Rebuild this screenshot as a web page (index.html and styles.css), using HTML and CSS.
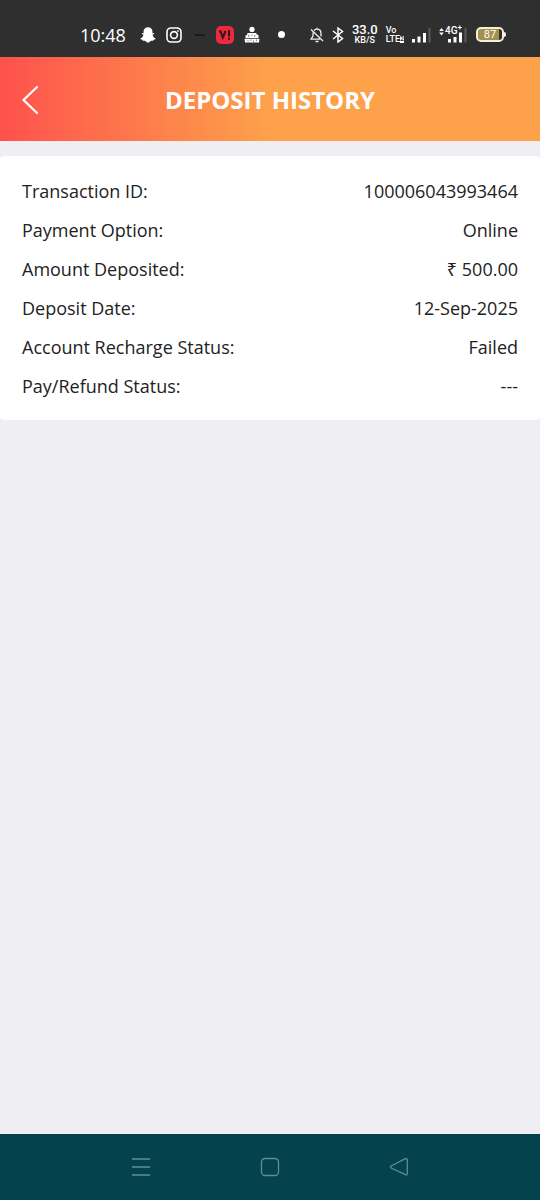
FILE: index.html
```html
<!DOCTYPE html>
<html lang="en">
<head>
<meta charset="utf-8">
<meta name="viewport" content="width=device-width, initial-scale=1">
<title>Deposit History</title>
<link rel="stylesheet" href="styles.css">
</head>
<body>
<div class="screen">
  <div class="status-bar">
    <div class="status-group status-left">
      <span class="clock">10:48</span>
      <svg width="16" height="16" viewBox="0 0 16 16" fill="#fff" aria-hidden="true"><path d="M8 .3C5.300.3 3.600 2 3.600 4.300V6.200L2.100 6C1.500 6.300 2 7.200 3.400 7.700C3.200 9.300 2 10.800.3 11.500C.1 12.300 1 12.600 2.400 12.800L2.800 13.800L4.900 13.700C6 14.500 6.800 15.500 8 15.500S10 14.500 11.100 13.700L13.200 13.800L13.600 12.800C15 12.600 15.900 12.300 15.700 11.500C14 10.800 12.800 9.300 12.600 7.700C14 7.200 14.500 6.300 13.900 6L12.400 6.200V4.300C12.400 2 10.700.3 8 .3Z"/></svg>
      <svg width="16" height="16" viewBox="0 0 16 16" fill="none" stroke="#fff" stroke-width="1.600" aria-hidden="true"><rect x="1" y="1" width="14" height="14" rx="4"/><circle cx="8" cy="8" r="3.400"/><circle cx="12" cy="4" r=".6" fill="#fff" stroke-width=".6"/></svg>
      <svg width="14" height="16" viewBox="0 0 14 16" aria-hidden="true"><path d="M2 8L5 7L6 7.500H13V8.700H6L5 9Z" fill="#111"/></svg>
      <span class="vi-badge"><svg width="18" height="18" viewBox="0 0 18 18" fill="none" stroke="#2d1720" stroke-width="2" aria-hidden="true"><path d="M3 5.500H4.600L6.800 11.500L9.600 5M13 4V10.500M13 11.800V13.800"/></svg></span>
      <svg width="16" height="18" viewBox="0 0 16 18" fill="#fff" aria-hidden="true"><circle cx="8" cy="3.400" r="2.600"/><path d="M3.500 7H12L13 8.500L14.500 9V12H1.500V9.500L3 9Z"/><path d="M5 8.500L4.500 11M8 8.500V10M11 9L10.500 11" stroke="#2f2f2f" stroke-width=".6"/><path d="M.5 12.800H15.500L15 16.500H1Z"/><path d="M4 14V15.500M7 13.500V15M9.500 14.500V16M12.500 13.500V15" stroke="#2f2f2f" stroke-width=".6"/></svg>
      <span class="dot"></span>
    </div>
    <div class="status-group status-right">
      <svg width="14" height="16" viewBox="0 0 14 16" fill="none" stroke="#eee" stroke-width="1.300" aria-hidden="true"><path d="M4 3.400C5 2.500 6 2.200 7 2.200C9.500 2.200 11 4 11 6.500V9.500M3 5.500V9L1 12.200H10M5.500 14.500H8.500M7 .7V2M1 2.500L13 14"/></svg>
      <svg width="12" height="16" viewBox="0 0 12 16" fill="none" stroke="#fff" stroke-width="1.500" aria-hidden="true"><path d="M1 4L10.500 11.500L6 15V1L10.500 4.500L1 12"/></svg>
      <span class="speed"><span class="speed-value">33.0</span><span class="speed-unit">KB/S</span></span>
      <span class="volte"><span>Vo</span><span class="volte-row">LTE<span class="volte-sim">2</span></span></span>
      <svg width="19" height="16" viewBox="0 0 19 16" fill="#fff" aria-hidden="true"><path d="M0 12H3V15.500H0ZM5.500 9.500H8.500V15.500H5.500ZM11 6H14V15.500H11Z"/><path d="M16.500 1H18.500V15.500H16.500Z" fill="#5b5b5b"/></svg>
      <span class="network">
        <svg width="29" height="16" viewBox="0 0 29 16" fill="#fff" aria-hidden="true"><path d="M.2 4L2.500 1L4.800 4ZM.2 5.500L2.500 8.500L4.800 5.500Z"/><path d="M9 12H12V15.500H9ZM14.500 10H17.500V15.500H14.500ZM20 5.500H23V15.500H20Z"/><path d="M25.500 1H27.500V15.500H25.500Z" fill="#5b5b5b"/></svg>
        <span class="network-label">4G<sup>+</sup></span>
      </span>
      <span class="battery">87</span>
    </div>
  </div>

  <header class="app-header">
    <button class="back" type="button" aria-label="Back"><svg width="18" height="30" viewBox="0 0 18 30" fill="none" stroke="#fff" stroke-width="2.300" stroke-linecap="round" stroke-linejoin="round" aria-hidden="true"><path d="M16 2L2.500 15L16 28"/></svg></button>
    <h1 class="title">DEPOSIT HISTORY</h1>
  </header>

  <main class="content">
    <dl class="card">
      <div class="row"><dt>Transaction ID:</dt><dd>100006043993464</dd></div>
      <div class="row"><dt>Payment Option:</dt><dd>Online</dd></div>
      <div class="row"><dt>Amount Deposited:</dt><dd>₹ 500.00</dd></div>
      <div class="row"><dt>Deposit Date:</dt><dd>12-Sep-2025</dd></div>
      <div class="row"><dt>Account Recharge Status:</dt><dd>Failed</dd></div>
      <div class="row"><dt>Pay/Refund Status:</dt><dd>---</dd></div>
    </dl>
  </main>

  <nav class="nav-bar" aria-label="System">
    <button class="nav-button" type="button" aria-label="Recent apps"><svg width="20" height="20" viewBox="0 0 20 20" fill="none" stroke="#5d9096" stroke-width="1.400" aria-hidden="true"><path d="M1 2H19M1 10H19M1 18H19"/></svg></button>
    <button class="nav-button" type="button" aria-label="Home"><svg width="20" height="20" viewBox="0 0 20 20" fill="none" stroke="#5d9096" stroke-width="1.300" aria-hidden="true"><rect x="1.500" y="1.500" width="17" height="17" rx="3.500"/></svg></button>
    <button class="nav-button" type="button" aria-label="Go back"><svg width="20" height="20" viewBox="0 0 20 20" fill="none" stroke="#5d9096" stroke-width="1.300" stroke-linejoin="round" aria-hidden="true"><path d="M2 9L16.500 1.700Q18.300 1.300 18.300 3V16.500Q18.300 18.300 16.500 17.700L2 11Q1 10 2 9Z"/></svg></button>
  </nav>
</div>
</body>
</html>
```
FILE: styles.css
```css
* {
  box-sizing: border-box;
}

body {
  margin: 0;
  font-family: "Open Sans", "Noto Sans", sans-serif;
  color: #222;
  background: #efeef3;
}

button {
  padding: 0;
  border: 0;
  background: none;
  cursor: pointer;
}

svg {
  display: block;
  flex: none;
}

.screen {
  display: flex;
  flex-direction: column;
  min-height: 100vh;
}

.status-bar {
  display: flex;
  justify-content: space-between;
  align-items: center;
  padding: 12px 36px 0 80px;
  height: 57px;
  background: #2f2f2f;
  color: #fff;
}

.status-group {
  display: flex;
  align-items: center;
}

.status-left {
  gap: 10px;
}

.status-right {
  gap: 8px;
}

.clock {
  margin-right: 4px;
  font-size: 18px;
  line-height: 24px;
}

.vi-badge {
  border-radius: 5px;
  background: #ed2a3c;
}

.dot {
  width: 7px;
  height: 7px;
  margin-left: 8px;
  border-radius: 50%;
  background: #fff;
}

.speed,
.volte {
  display: flex;
  flex-direction: column;
  align-items: center;
  font-family: Roboto, sans-serif;
  font-weight: 500;
}

.speed-value {
  font-size: 13px;
  line-height: 12px;
}

.speed-unit {
  font-size: 9px;
  line-height: 9px;
}

.volte {
  align-items: flex-start;
  font-size: 9px;
  line-height: 9px;
}

.volte-row {
  display: flex;
  align-items: center;
}

.volte-sim {
  background: #fff;
  color: #2f2f2f;
  font-size: 7px;
  line-height: 7px;
}

.network {
  position: relative;
}

.network-label {
  position: absolute;
  top: -1px;
  left: 6px;
  font: 500 10px/10px Roboto, sans-serif;
}

.network-label sup {
  font-size: 8px;
  line-height: 0;
}

.battery {
  position: relative;
  width: 28px;
  height: 15px;
  border: 2px solid #f3efd9;
  border-radius: 5px;
  background: linear-gradient(90deg, #a0914d 87%, #2f2f2f 87%);
  font: 400 11px/11px Roboto, sans-serif;
  text-align: center;
}

.battery::after {
  content: "";
  position: absolute;
  top: 3px;
  right: -4px;
  width: 2px;
  height: 5px;
  border-radius: 0 2px 2px 0;
  background: #f3efd9;
}

.app-header {
  display: grid;
  grid-template-columns: 1fr auto 1fr;
  align-items: center;
  height: 84px;
  padding: 2px 21px 0;
  background: linear-gradient(90deg, #fe514d 0%, #fda14b 50%, #fda14b 100%);
  color: #fff;
}

.back {
  justify-self: start;
}

.title {
  margin: 0;
  font-size: 24px;
  font-weight: 700;
  line-height: 32px;
}

.content {
  flex: 1;
  padding-top: 15px;
}

.card {
  margin: 0;
  padding: 16px 22px 14px;
  border-radius: 4px;
  background: #fff;
}

.row {
  display: flex;
  justify-content: space-between;
  font-size: 18px;
  line-height: 39px;
}

.row dd {
  margin: 0;
}

.nav-bar {
  display: flex;
  justify-content: center;
  height: 66px;
  background: #04424d;
}

.nav-button {
  display: grid;
  place-items: center;
  width: 129px;
}
```
